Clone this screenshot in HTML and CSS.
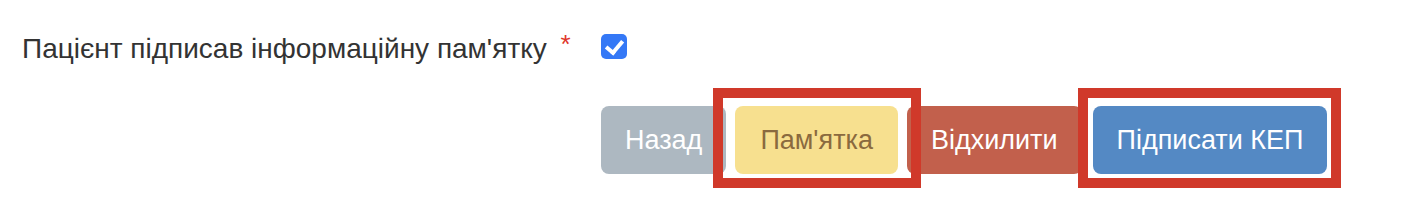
FILE: index.html
```html
<!DOCTYPE html>
<html lang="uk">
<head>
    <meta charset="UTF-8">
    <title>Підпис пам'ятки</title>
    <link rel="stylesheet" href="styles.css">
</head>
<body>
    <form class="sign-form">
        <div class="form-row">
            <label class="form-label" for="signed">Пацієнт підписав інформаційну пам'ятку <span class="required">*</span></label>
            <div class="form-control">
                <input type="checkbox" id="signed" class="check" checked>
            </div>
        </div>

        <div class="form-row">
            <div class="form-label"></div>
            <div class="form-control actions">
                <button type="button" class="btn btn-back">Назад</button>
                <div class="marked marked-memo">
                    <button type="button" class="btn btn-memo">Пам'ятка</button>
                </div>
                <button type="button" class="btn btn-reject">Відхилити</button>
                <div class="marked marked-sign">
                    <button type="button" class="btn btn-sign">Підписати КЕП</button>
                </div>
            </div>
        </div>
    </form>
</body>
</html>
```

FILE: styles.css
```css
body {
    margin: 0;
    background: #fff;
    font-family: "Liberation Sans", Arial, sans-serif;
    color: #333;
}

.sign-form {
    padding: 28px 0 33px 0;
}

.form-row {
    display: flex;
    align-items: center;
}

.form-label {
    width: 601px;
    box-sizing: border-box;
    padding-left: 22px;
    font-size: 28px;
    line-height: 32px;
}

.required {
    color: #e0352b;
    font-size: 26px;
    vertical-align: 5px;
    margin-left: 6px;
}

.check {
    appearance: none;
    margin: 0;
    width: 26px;
    height: 25px;
    border-radius: 5px;
    background: #3478f6;
    position: relative;
    display: block;
}

.check::after {
    content: "";
    position: absolute;
    left: 8px;
    top: 3px;
    width: 7px;
    height: 13px;
    border: solid #fff;
    border-width: 0 4px 4px 0;
    transform: rotate(40deg);
}

.actions {
    display: flex;
    align-items: flex-start;
    gap: 9px;
    margin-top: 41px;
}

.btn {
    display: block;
    height: 68px;
    padding: 0 24px;
    border: none;
    border-radius: 8px;
    font-family: inherit;
    font-size: 27px;
    color: #fff;
    cursor: pointer;
}

.btn-back {
    background-color: #adb8c1;
}

.btn-memo {
    background-color: #f7e08f;
    color: #8a6a3e;
    padding: 0 25px;
}

.btn-reject {
    background-color: #c2604c;
}

.btn-sign {
    background-color: #5489c4;
    margin-left: 2px;
    padding: 0 24px;
}

.marked {
    position: relative;
    height: 68px;
}

.marked::after {
    content: "";
    position: absolute;
    top: -18px;
    height: 100px;
    box-sizing: border-box;
    border: 10px solid #d0392a;
    pointer-events: none;
}

.marked-memo::after {
    left: -22px;
    right: -23px;
}

.marked-sign::after {
    left: -13px;
    right: -14px;
}
```
